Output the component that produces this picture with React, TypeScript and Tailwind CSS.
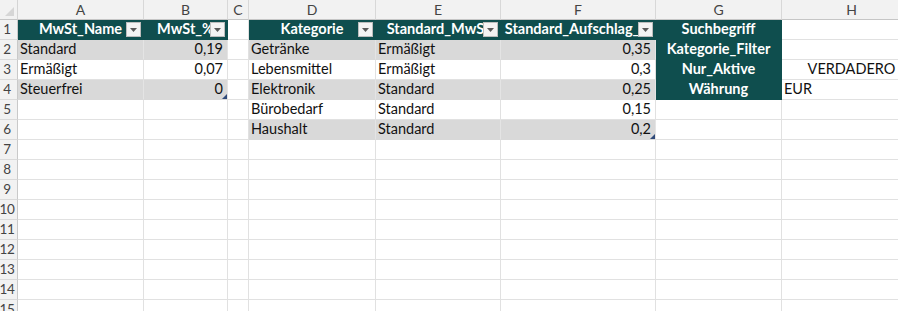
import React from "react";

type Cell = {
  text?: string;
  kind?: "head" | "band" | "plain" | "side";
  align?: "left" | "right" | "center";
  filter?: boolean;
  last?: boolean;
  handle?: boolean;
};

const LETTERS = ["A", "B", "C", "D", "E", "F", "G", "H"];

// Sheet content keyed by row number, one entry per column A..H
const DATA: Record<number, Cell[]> = {
  1: [
    { text: "MwSt_Name", kind: "head", align: "center", filter: true },
    { text: "MwSt_%", kind: "head", align: "center", filter: true },
    {},
    { text: "Kategorie", kind: "head", align: "center", filter: true },
    { text: "Standard_MwSt", kind: "head", align: "center", filter: true },
    { text: "Standard_Aufschlag_%", kind: "head", align: "center", filter: true },
    { text: "Suchbegriff", kind: "side", align: "center" },
    {},
  ],
  2: [
    { text: "Standard", kind: "band" },
    { text: "0,19", kind: "band", align: "right" },
    {},
    { text: "Getränke", kind: "band" },
    { text: "Ermäßigt", kind: "band" },
    { text: "0,35", kind: "band", align: "right" },
    { text: "Kategorie_Filter", kind: "side", align: "center" },
    {},
  ],
  3: [
    { text: "Ermäßigt", kind: "plain" },
    { text: "0,07", kind: "plain", align: "right" },
    {},
    { text: "Lebensmittel", kind: "plain" },
    { text: "Ermäßigt", kind: "plain" },
    { text: "0,3", kind: "plain", align: "right" },
    { text: "Nur_Aktive", kind: "side", align: "center" },
    { text: "VERDADERO", align: "center" },
  ],
  4: [
    { text: "Steuerfrei", kind: "band", last: true },
    { text: "0", kind: "band", align: "right", last: true, handle: true },
    {},
    { text: "Elektronik", kind: "band" },
    { text: "Standard", kind: "band" },
    { text: "0,25", kind: "band", align: "right" },
    { text: "Währung", kind: "side", align: "center" },
    { text: "EUR" },
  ],
  5: [
    {},
    {},
    {},
    { text: "Bürobedarf", kind: "plain" },
    { text: "Standard", kind: "plain" },
    { text: "0,15", kind: "plain", align: "right" },
    {},
    {},
  ],
  6: [
    {},
    {},
    {},
    { text: "Haushalt", kind: "band", last: true },
    { text: "Standard", kind: "band", last: true },
    { text: "0,2", kind: "band", align: "right", last: true, handle: true },
    {},
    {},
  ],
};

function FilterButton() {
  return (
    <span className="absolute right-[2px] top-[2px] flex h-[15px] w-[15px] items-center justify-center border border-[#bdbdbd] bg-[#f3f3f3]">
      <svg width="7" height="4" viewBox="0 0 7 4">
        <path d="M0 0 H7 L3.5 4 Z" fill="#5a5a5a" />
      </svg>
    </span>
  );
}

function SheetCell({ cell }: { cell: Cell }) {
  const kind = cell.kind;
  let tone = "bg-white border-r-[#e1e1e1] border-b-[#e1e1e1] text-[#111]";
  if (kind === "head" || kind === "side") {
    tone = "bg-[#0f4e4e] border-r-[#0f4e4e] border-b-[#0f4e4e] text-white font-bold";
  } else if (kind === "band") {
    tone = "bg-[#d9d9d9] border-r-[#e4e4e4] border-b-[#d9d9d9] text-[#111]";
  } else if (kind === "plain") {
    tone = "bg-white border-r-[#e1e1e1] border-b-[#e1e1e1] text-[#111]";
  }
  const bottom = cell.last ? "border-b-[#1c1c1c]" : "";
  const align =
    cell.align === "right"
      ? "justify-end pr-[4px]"
      : cell.align === "center"
        ? "justify-center"
        : "justify-start pl-[2px]";
  return (
    <div
      className={`relative flex items-end overflow-hidden whitespace-nowrap border-r border-b pb-[1px] text-[14.5px] leading-[18px] ${tone} ${bottom} ${align}`}
    >
      <span className="shrink-0">{cell.text}</span>
      {cell.filter && <FilterButton />}
      {cell.handle && (
        <svg className="absolute bottom-0 right-0" width="5" height="5" viewBox="0 0 5 5">
          <path d="M5 0 V5 H0 Z" fill="#2f4a7a" />
        </svg>
      )}
    </div>
  );
}

export default function App() {
  const rows = Array.from({ length: 15 }, (_, i) => i + 1);
  return (
    <div className="h-[311px] w-[898px] overflow-hidden bg-white font-['Lato','Liberation_Sans',sans-serif]">
      <div className="grid auto-rows-[20px] grid-cols-[18px_126px_84px_21px_127px_125px_155px_126px_140px]">
        {/* corner select-all */}
        <div className="relative border-r border-b border-r-[#d4d4d4] border-b-[#c6c6c6] bg-[#f2f2f2]">
          <svg className="absolute bottom-[3px] right-[3px]" width="9" height="9" viewBox="0 0 9 9">
            <path d="M9 0 V9 H0 Z" fill="#d6d6d6" />
          </svg>
        </div>
        {LETTERS.map((l) => (
          <div
            key={l}
            className="flex items-center justify-center border-r border-b border-r-[#d8d8d8] border-b-[#c6c6c6] bg-[#f2f2f2] text-[14px] text-[#444]"
          >
            {l}
          </div>
        ))}
        {rows.map((r) => (
          <div key={r} className="contents">
            <div className="flex items-center justify-center overflow-visible border-r border-b border-r-[#c9c9c9] border-b-[#dadada] bg-[#f2f2f2] pr-[3px] text-[13.5px] tracking-[-0.3px] text-[#444]">
              {r}
            </div>
            {(DATA[r] ?? LETTERS.map(() => ({}))).map((c, i) => (
              <SheetCell key={i} cell={c} />
            ))}
          </div>
        ))}
      </div>
    </div>
  );
}
